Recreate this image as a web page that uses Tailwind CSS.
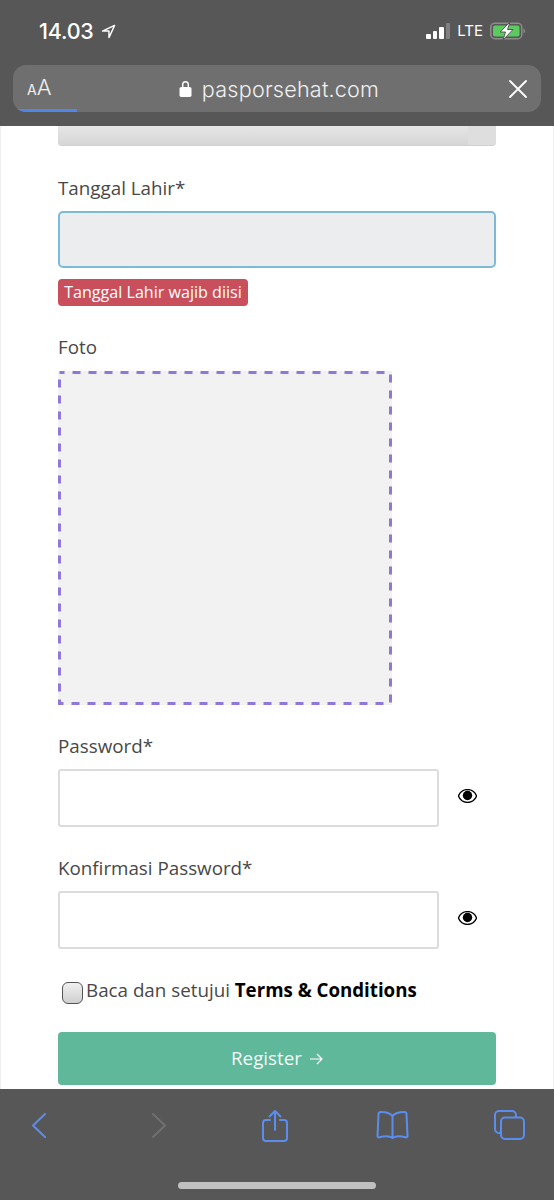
<!DOCTYPE html>
<html lang="en">
<head>
    <meta charset="UTF-8">
    <meta name="viewport" content="width=device-width, initial-scale=1.0">
    <title>Paspor Sehat - Register</title>
    <script src="https://cdn.jsdelivr.net/npm/@tailwindcss/browser@4"></script>
</head>
<body class="bg-white font-['Open_Sans',sans-serif]">
    <div class="flex flex-col h-[1200px] w-[554px] overflow-hidden">
        <!-- Status bar + address bar -->
        <header class="h-[126px] shrink-0 bg-[#575757] px-[13px]">
            <div class="h-[65px] flex items-start justify-between">
                <div class="flex items-center gap-[7px] pl-[26px] pt-[18px] text-white">
                    <span class="text-[21.500px] leading-[26px] font-medium font-['Inter',sans-serif] tracking-[-0.2px]">14.03</span>
                    <svg width="15" height="15" viewBox="0 0 16 16" fill="none" stroke="#fff" stroke-width="1.500" stroke-linejoin="round"><path d="M14.500 1.500 1.500 7.500h7v7z"/></svg>
                </div>
                <div class="flex items-center pt-[22px] pr-[15px]">
                    <div class="flex items-end gap-[2px] h-[16px]">
                        <span class="w-[4.500px] h-[5px] rounded-[1px] bg-white"></span>
                        <span class="w-[4.500px] h-[8px] rounded-[1px] bg-white"></span>
                        <span class="w-[4.500px] h-[12px] rounded-[1px] bg-white"></span>
                        <span class="w-[4.500px] h-[16px] rounded-[1px] bg-[#808080]"></span>
                    </div>
                    <span class="ml-[7px] text-[15px] leading-[18px] text-white font-['Inter',sans-serif]">LTE</span>
                    <svg class="ml-[7px]" width="36" height="18" viewBox="0 0 36 18">
                        <rect x="0.750" y="1.250" width="31" height="15.500" rx="4" fill="none" stroke="#8c8c8c" stroke-width="1.500"/>
                        <rect x="3" y="3.500" width="26.500" height="11" rx="2" fill="#5ccb5f"/>
                        <path d="M33.500 6.500v5c1-.3 1.500-1.300 1.500-2.500s-.5-2.200-1.500-2.500z" fill="#8c8c8c"/>
                        <path d="M20 0 10 10h5.500l-2.500 8L23 7.500h-5.500z" fill="#fff" stroke="#575757" stroke-width="1"/>
                    </svg>
                </div>
            </div>
            <div class="relative h-[47px] rounded-[13px] bg-[#6f6f6f] overflow-hidden flex items-center justify-center">
                <div class="absolute left-[14px] top-[10px] flex items-baseline text-white/90 font-['Inter',sans-serif]">
                    <span class="text-[14px] leading-[24px]">A</span><span class="text-[22px] leading-[24px] font-light">A</span>
                </div>
                <div class="flex items-center gap-[10px] pl-[4px]">
                    <svg width="13" height="17" viewBox="0 0 13 17" fill="#fff"><path d="M3 7V4.500a3.500 3.500 0 0 1 7 0V7H8.600V4.500a2.100 2.100 0 0 0-4.200 0V7z"/><rect x="0.500" y="7" width="12" height="10" rx="1.800"/></svg>
                    <span class="text-[21.600px] leading-[28px] text-white/90 font-['Inter',sans-serif] font-light tracking-[0.2px]">pasporsehat.com</span>
                </div>
                <svg class="absolute right-[14px] top-[15px]" width="18" height="18" viewBox="0 0 18 18" stroke="#fff" stroke-width="1.800" stroke-linecap="round"><path d="M1 1l16 16M17 1 1 17"/></svg>
                <div class="absolute left-0 bottom-0 h-[3px] w-[64px] bg-[#4f86e8] rounded-bl-[13px]"></div>
            </div>
        </header>

        <!-- Form -->
        <main class="flex-1 overflow-hidden bg-white border-x border-[#eeeeee] px-[57px] text-[#484848]">
            <div class="h-[20px] rounded-b-[4px] flex overflow-hidden bg-[#dcdcdc] border-b border-[#d0d0d0]">
                <div class="flex-1 bg-gradient-to-b from-[#e6e6e6] to-[#d6d6d6]"></div>
                <div class="w-[28px] bg-[#dedede]"></div>
            </div>

            <label class="block mt-[29px] text-[18.800px] leading-[26px]">Tanggal Lahir*</label>
            <div class="mt-[10px] h-[57px] rounded-[5px] border-2 border-[#7cbad9] bg-[#ecedef]"></div>
            <div class="mt-[11px] w-[190px] h-[27px] rounded-[4px] bg-[#c94f5c] text-white text-[16.100px] leading-[27px] text-center">Tanggal Lahir wajib diisi</div>

            <label class="block mt-[28px] text-[18.800px] leading-[26px]">Foto</label>
            <div class="relative mt-[11px] w-[334px] h-[334px] bg-[#f2f2f2]">
                <svg class="absolute inset-0" width="334" height="334" viewBox="0 0 334 334" fill="none"><rect x="1.500" y="1.500" width="331" height="331" stroke="#9079d6" stroke-width="3" stroke-dasharray="8 8" stroke-dashoffset="3"/></svg>
            </div>

            <label class="block mt-[28px] text-[18.800px] leading-[26px]">Password*</label>
            <div class="mt-[10px] flex items-center">
                <div class="w-[381px] h-[58px] rounded-[3px] border-2 border-[#dcdcdc] bg-white"></div>
                <svg class="ml-[19px] -mt-[5px]" width="19" height="14" viewBox="0 0 19 14"><path d="M9.500 0.600C5.400 0.600 2 3 0.400 7c1.600 4 5 6.400 9.100 6.400S17 11 18.600 7C17 3 13.600 0.600 9.500 0.600z" fill="none" stroke="#000" stroke-width="1.400"/><circle cx="9.500" cy="6.500" r="4.700" fill="#000"/></svg>
            </div>

            <label class="block mt-[28px] text-[18.800px] leading-[26px]">Konfirmasi Password*</label>
            <div class="mt-[10px] flex items-center">
                <div class="w-[381px] h-[58px] rounded-[3px] border-2 border-[#dcdcdc] bg-white"></div>
                <svg class="ml-[19px] -mt-[5px]" width="19" height="14" viewBox="0 0 19 14"><path d="M9.500 0.600C5.400 0.600 2 3 0.400 7c1.600 4 5 6.400 9.100 6.400S17 11 18.600 7C17 3 13.600 0.600 9.500 0.600z" fill="none" stroke="#000" stroke-width="1.400"/><circle cx="9.500" cy="6.500" r="4.700" fill="#000"/></svg>
            </div>

            <div class="mt-[30px] flex items-center pl-[4px] h-[22px]">
                <span class="w-[21px] h-[22px] mt-[5px] rounded-[6px] border border-[#555555] bg-gradient-to-b from-[#f0f0f0] to-[#cfcfcf]"></span>
                <span class="ml-[3px] text-[18.800px] leading-[26px] whitespace-nowrap">Baca dan setujui <b class="text-[18.700px] font-bold text-black">Terms &amp; Conditions</b></span>
            </div>

            <div class="mt-[31px] h-[53px] rounded-[4px] bg-[#5fb89a] flex items-center justify-center gap-[8px] text-white/95 text-[18.800px]">
                <span>Register</span>
                <svg class="mt-[1px]" width="13" height="12" viewBox="0 0 13 12" fill="none" stroke="#fff" stroke-width="1.200"><path d="M0 6h12M7 1l5 5-5 5"/></svg>
            </div>
        </main>

        <!-- Safari toolbar -->
        <footer class="h-[111px] shrink-0 bg-[#575757]">
            <div class="h-[72px] flex items-center pl-[32px]">
                <svg width="14" height="25" viewBox="0 0 14 25" fill="none" stroke="#5b8def" stroke-width="2" stroke-linecap="round" stroke-linejoin="round"><path d="M13 1 1 12.500 13 24"/></svg>
                <svg class="ml-[106px]" width="14" height="25" viewBox="0 0 14 25" fill="none" stroke="#707070" stroke-width="2" stroke-linecap="round" stroke-linejoin="round"><path d="M1 1l12 11.500L1 24"/></svg>
                <svg class="ml-[96px]" width="26" height="33" viewBox="0 0 26 33" fill="none" stroke="#5b8def" stroke-width="2" stroke-linecap="round" stroke-linejoin="round"><path d="M8 11H4a3 3 0 0 0-3 3v15a3 3 0 0 0 3 3h18a3 3 0 0 0 3-3V14a3 3 0 0 0-3-3h-4"/><path d="M13 21V2M7.500 7.500 13 2l5.500 5.500"/></svg>
                <svg class="ml-[88px]" width="33" height="28" viewBox="0 0 33 28" fill="none" stroke="#5b8def" stroke-width="2" stroke-linejoin="round" stroke-linecap="round"><path d="M16.500 5C14 2 9 1 5 1 3 1 2.500 2 2.500 3L1.500 25c0 1 .8 1.600 2 1.300 5-1.300 10-1.300 13 .7 3-2 8-2 13-.7 1.200.3 2-.3 2-1.300l-1-22c0-1-.5-2-2.500-2-4 0-9 1-11.500 4zM16.500 5v22"/></svg>
                <svg class="ml-[85px]" width="31" height="30" viewBox="0 0 31 30" fill="none" stroke="#5b8def" stroke-width="2"><path d="M6.500 23H5a4 4 0 0 1-4-4V5a4 4 0 0 1 4-4h13a4 4 0 0 1 4 4v2"/><rect x="7" y="7.500" width="23" height="21.500" rx="4"/></svg>
            </div>
            <div class="mx-auto mt-[21px] w-[198px] h-[7px] rounded-full bg-[#c0c0c0]"></div>
        </footer>
    </div>
</body>
</html>
